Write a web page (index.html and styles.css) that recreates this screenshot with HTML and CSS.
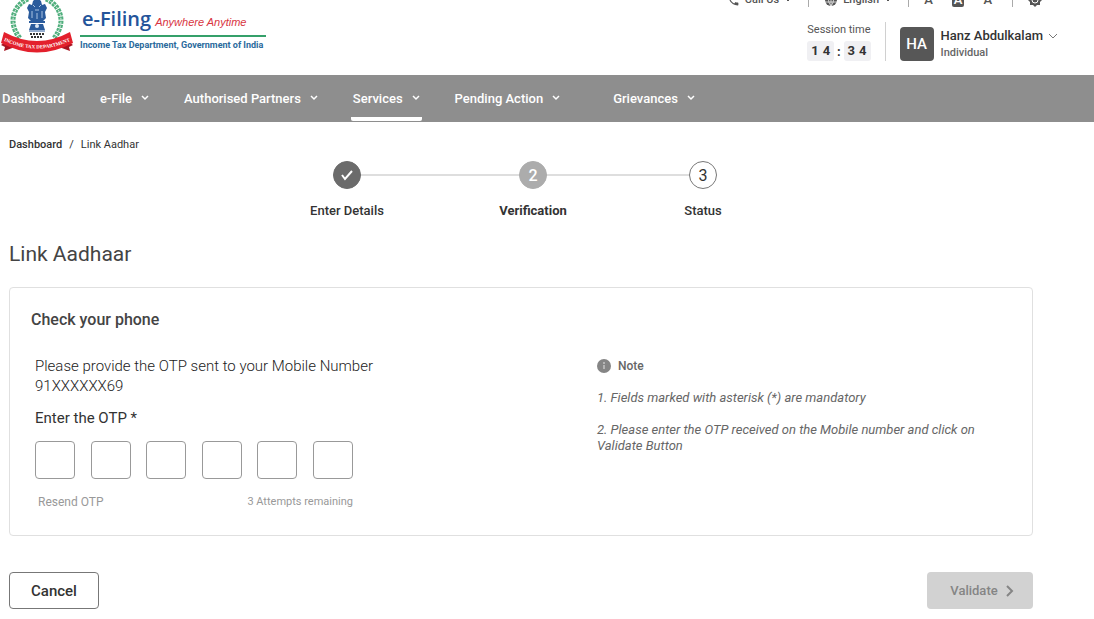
FILE: index.html
```html
<!DOCTYPE html>
<html lang="en">
<head>
    <meta charset="UTF-8">
    <meta name="viewport" content="width=device-width, initial-scale=1.0">
    <title>Link Aadhaar | e-Filing</title>
    <link rel="stylesheet" href="styles.css">
</head>
<body>
    <!-- Header -->
    <header class="header">
        <a class="brand" href="#">
            <svg class="emblem" viewBox="0 0 74 58" aria-hidden="true">
                <!-- Wreath -->
                <path d="M20 42C8 28 12 10 28 3" fill="none" stroke="#4fae7c" stroke-width="5" stroke-dasharray="3 1"/>
                <path d="M54 42C66 28 62 10 46 3" fill="none" stroke="#4fae7c" stroke-width="5" stroke-dasharray="3 1"/>
                <path d="M20 42C8 28 12 10 28 3M54 42C66 28 62 10 46 3" fill="none" stroke="#d8efe2" stroke-width="1" stroke-dasharray="2 2"/>
                <!-- Lions -->
                <path d="M33 5q4-4 8 0l1 4 3-1 2 4-2 4 1 6-3 3H31l-3-3 1-6-2-4 2-4 3 1z" fill="#2a5b9c"/>
                <path d="M33 9l2 2M41 9l-2 2M35 14h4M32 15v7M42 15v7M37 17v6" stroke="#a9c3e2" stroke-width="1"/>
                <path d="M29 25h16v2H29zM31 28h12l2 6H29z" fill="#2a5b9c"/>
                <circle cx="37" cy="30" r="2" fill="#dbe7f4"/>
                <path d="M29 35h16" stroke="#2a5b9c" stroke-width="1"/>
                <path d="M30 38h14M31 41h12" stroke="#333" stroke-width="2" stroke-dasharray="2 1"/>
                <!-- Ribbon -->
                <path d="M1 49l9-7 5 9-11 4 1-4z" fill="#a81522"/>
                <path d="M73 49l-9-7-5 9 11 4-1-4z" fill="#a81522"/>
                <path d="M4 36Q37 54 70 36l3 11Q37 66 1 47z" fill="#e3202c"/>
                <path id="ribbon-line" d="M2 44Q37 61 72 44" fill="none"/>
                <text class="ribbon-text"><textPath href="#ribbon-line" startOffset="50%" text-anchor="middle">INCOME TAX DEPARTMENT</textPath></text>
            </svg>
            <span class="brand-text">
                <span class="brand-top">
                    <span class="brand-name">e-Filing</span>
                    <span class="brand-tag">Anywhere Anytime</span>
                </span>
                <span class="brand-dept">Income Tax Department, Government of India</span>
            </span>
        </a>

        <div class="header-right">
            <!-- Utility links -->
            <div class="utility">
                <button class="util-btn call" type="button">
                    <svg width="13" height="13" viewBox="0 0 24 24" aria-hidden="true"><path d="M6.6 10.8c1.4 2.800 3.800 5.100 6.600 6.600l2.200-2.200c.3-.3.700-.4 1-.2 1.100.4 2.300.6 3.600.6.600 0 1 .4 1 1V20c0 .6-.4 1-1 1C10.600 21 3 13.400 3 4c0-.6.400-1 1-1h3.500c.600 0 1 .4 1 1 0 1.300.2 2.500.6 3.600.1.300 0 .7-.3 1z" fill="currentColor"/></svg>
                    Call Us
                    <svg width="8" height="8" viewBox="0 0 8 8" aria-hidden="true"><path d="M2 3l2 2 2-2" fill="none" stroke="currentColor"/></svg>
                </button>
                <button class="util-btn lang" type="button">
                    <svg width="14" height="14" viewBox="0 0 14 14" aria-hidden="true"><circle cx="7" cy="7" r="6" fill="#555"/><path d="M1 5h12M1 9h12M7 1v12M7 1Q2 7 7 13Q12 7 7 1" fill="none" stroke="#fff" stroke-opacity=".7"/></svg>
                    English
                    <svg width="8" height="8" viewBox="0 0 8 8" aria-hidden="true"><path d="M2 3l2 2 2-2" fill="none" stroke="currentColor"/></svg>
                </button>
                <div class="text-size">
                    <button class="util-btn" type="button" aria-label="Smaller text">A</button>
                    <button class="util-btn boxed" type="button" aria-label="Normal text">A</button>
                    <button class="util-btn" type="button" aria-label="Larger text">A</button>
                </div>
                <button class="util-btn contrast" type="button" aria-label="Contrast">
                    <svg width="14" height="14" viewBox="0 0 14 14"><path d="M7 0l2 2h3v3l2 2-2 2v3H9l-2 2-2-2H2V9L0 7l2-2V2h3z" fill="#555"/><circle cx="7" cy="7" r="3" fill="none" stroke="#fff"/></svg>
                </button>
            </div>

            <!-- Session and user -->
            <div class="account">
                <div class="session">
                    <span class="session-label">Session time</span>
                    <div class="clock">
                        <span class="digits"><span>1</span><span>4</span></span>
                        <span class="colon">:</span>
                        <span class="digits"><span>3</span><span>4</span></span>
                    </div>
                </div>
                <button class="user" type="button">
                    <span class="avatar">HA</span>
                    <span class="user-text">
                        <span class="user-name">Hanz Abdulkalam
                            <svg width="10" height="8" viewBox="0 0 10 8" aria-hidden="true"><path d="M1 2l4 4 4-4" fill="none" stroke="#777" stroke-width="1"/></svg>
                        </span>
                        <span class="user-role">Individual</span>
                    </span>
                </button>
            </div>
        </div>
    </header>

    <!-- Main menu -->
    <nav class="menu">
        <a href="#">Dashboard</a>
        <a href="#">e-File <svg class="caret" viewBox="0 0 8 6" aria-hidden="true"><path d="M1 1l3 3 3-3"/></svg></a>
        <a href="#">Authorised Partners <svg class="caret" viewBox="0 0 8 6" aria-hidden="true"><path d="M1 1l3 3 3-3"/></svg></a>
        <a class="active" href="#">Services <svg class="caret" viewBox="0 0 8 6" aria-hidden="true"><path d="M1 1l3 3 3-3"/></svg></a>
        <a href="#">Pending Action <svg class="caret" viewBox="0 0 8 6" aria-hidden="true"><path d="M1 1l3 3 3-3"/></svg></a>
        <a class="last" href="#">Grievances <svg class="caret" viewBox="0 0 8 6" aria-hidden="true"><path d="M1 1l3 3 3-3"/></svg></a>
    </nav>

    <main class="content">
        <div class="breadcrumb">
            <a href="#">Dashboard</a>
            <span>/</span>
            <span>Link Aadhar</span>
        </div>

        <!-- Progress steps -->
        <ol class="steps">
            <li class="step done">
                <span class="bullet"><svg width="14" height="12" viewBox="0 0 14 12" aria-label="Done"><path d="M2 6l3 4 7-8" fill="none" stroke="#fff" stroke-width="2"/></svg></span>
                <span class="step-label">Enter Details</span>
            </li>
            <li class="step current">
                <span class="bullet">2</span>
                <span class="step-label">Verification</span>
            </li>
            <li class="step">
                <span class="bullet">3</span>
                <span class="step-label">Status</span>
            </li>
        </ol>

        <h1>Link Aadhaar</h1>

        <form>
            <section class="card">
                <h2>Check your phone</h2>
                <div class="card-body">
                    <div class="otp">
                        <p class="otp-text">Please provide the OTP sent to your Mobile Number 91XXXXXX69</p>
                        <label class="otp-label" for="otp1">Enter the OTP *</label>
                        <div class="otp-boxes">
                            <input id="otp1" type="text" maxlength="1" inputmode="numeric">
                            <input type="text" maxlength="1" inputmode="numeric" aria-label="Digit 2">
                            <input type="text" maxlength="1" inputmode="numeric" aria-label="Digit 3">
                            <input type="text" maxlength="1" inputmode="numeric" aria-label="Digit 4">
                            <input type="text" maxlength="1" inputmode="numeric" aria-label="Digit 5">
                            <input type="text" maxlength="1" inputmode="numeric" aria-label="Digit 6">
                        </div>
                        <div class="otp-foot">
                            <button class="resend" type="button" disabled>Resend OTP</button>
                            <span class="attempts">3 Attempts remaining</span>
                        </div>
                    </div>
                    <aside class="note">
                        <h3>
                            <svg width="14" height="14" viewBox="0 0 14 14" aria-hidden="true"><circle cx="7" cy="7" r="7" fill="#858585"/><path d="M7 6v4M7 3v2" stroke="#b4b4b4" stroke-width="2"/></svg>
                            Note
                        </h3>
                        <p>1. Fields marked with asterisk (*) are mandatory</p>
                        <p>2. Please enter the OTP received on the Mobile number and click on Validate Button</p>
                    </aside>
                </div>
            </section>

            <div class="actions">
                <button class="btn cancel" type="button">Cancel</button>
                <button class="btn validate" type="submit" disabled>
                    Validate
                    <svg width="8" height="12" viewBox="0 0 8 12" aria-hidden="true"><path d="M1 1l5 5-5 5" fill="none" stroke="#858585" stroke-width="2"/></svg>
                </button>
            </div>
        </form>
    </main>
</body>
</html>
```
FILE: styles.css
```css
* {
    box-sizing: border-box;
}

body {
    margin: 0;
    font-family: Roboto, Arial, sans-serif;
    font-size: 12px;
    color: #333;
    background-color: #fff;
    overflow: hidden;
}

button {
    font-family: inherit;
    color: inherit;
    background: none;
    border: none;
    padding: 0;
    cursor: pointer;
}

a {
    color: inherit;
    text-decoration: none;
}

/* Header */
.header {
    display: flex;
    justify-content: space-between;
    align-items: flex-start;
    padding: 0 36px 14px 0;
}

.brand {
    display: flex;
    gap: 6px;
    margin-top: -4px;
}

.emblem {
    width: 74px;
    height: 58px;
}

.ribbon-text {
    font-family: "Liberation Serif", serif;
    font-size: 5px;
    font-weight: bold;
    fill: #fff;
}

.brand-text {
    display: flex;
    flex-direction: column;
    padding-top: 10px;
}

.brand-top {
    display: flex;
    align-items: baseline;
    gap: 4px;
    padding: 0 20px 0 2px;
    line-height: 25px;
    border-bottom: 2px solid #35a06a;
}

.brand-name {
    font-family: "Open Sans", sans-serif;
    font-size: 20px;
    font-weight: 600;
    color: #24549a;
}

.brand-tag {
    font-family: "Liberation Sans", sans-serif;
    font-size: 11px;
    font-style: italic;
    color: #d8343f;
}

.brand-dept {
    font-size: 9px;
    font-weight: bold;
    line-height: 16px;
    color: #2a6a9c;
}

.header-right {
    display: flex;
    flex-direction: column;
    align-items: flex-end;
}

/* Utility links */
.utility {
    display: flex;
    align-items: center;
    height: 16px;
    margin-top: -8px;
    margin-right: 16px;
    color: #555;
}

.util-btn {
    display: flex;
    align-items: center;
    gap: 5px;
    font-size: 11px;
    line-height: 14px;
    font-weight: 500;
}

.utility > * + * {
    border-left: 1px solid #aaa;
    padding-left: 15px;
    margin-left: 16px;
}

.text-size {
    display: flex;
    gap: 19px;
}

.text-size .util-btn {
    font-size: 13px;
}

.text-size .boxed {
    color: #fff;
    background-color: #555;
    border-radius: 2px;
    padding: 0 2px;
}

.utility .contrast {
    margin-left: 20px;
}

/* Session and user */
.account {
    display: flex;
    align-items: flex-end;
    margin-top: 14px;
}

.session {
    padding-right: 14px;
    border-right: 1px solid #d0d0d0;
}

.session-label {
    display: block;
    font-size: 11px;
    line-height: 16px;
    color: #555;
}

.clock {
    display: flex;
    align-items: center;
    justify-content: space-between;
    margin-top: 3px;
    font-size: 13px;
    font-weight: bold;
    color: #333;
}

.digits {
    display: flex;
    gap: 4px;
    line-height: 20px;
    padding: 0 4px;
    background-color: #f0f0f3;
    border-radius: 3px;
}

.user {
    display: flex;
    align-items: center;
    gap: 7px;
    margin-left: 14px;
    text-align: left;
}

.avatar {
    width: 34px;
    line-height: 34px;
    border-radius: 4px;
    background-color: #575757;
    color: #fff;
    font-size: 15px;
    font-weight: 500;
    text-align: center;
}

.user-text {
    display: flex;
    flex-direction: column;
    line-height: 17px;
}

.user-name {
    display: flex;
    align-items: center;
    gap: 5px;
    font-size: 13px;
    font-weight: 500;
    color: #333;
}

.user-role {
    font-size: 11px;
    font-weight: 500;
    color: #666;
}

/* Main menu */
.menu {
    display: flex;
    gap: 31px;
    height: 47px;
    padding-bottom: 1px;
    background-color: #8e8e8e;
    color: #fff;
    font-size: 13px;
    font-weight: 500;
}

.menu a {
    display: flex;
    align-items: center;
    gap: 9px;
    padding: 4px 2px 0;
    border-bottom: 4px solid transparent;
}

.menu .active {
    border-bottom-color: #fff;
    border-radius: 2px;
}

.menu .last {
    margin-left: 18px;
}

.caret {
    width: 8px;
    height: 6px;
    fill: none;
    stroke: #fff;
    stroke-width: 1.5;
}

/* Content */
.content {
    padding: 15px 61px 10px 9px;
}

.breadcrumb {
    display: flex;
    gap: 7px;
    font-size: 11px;
    line-height: 16px;
}

.breadcrumb a {
    font-weight: 500;
}

/* Progress steps */
.steps {
    display: flex;
    justify-content: center;
    list-style: none;
    margin: 8px 0 0;
    padding: 0 8px 0 0;
}

.step {
    position: relative;
    display: flex;
    flex-direction: column;
    align-items: center;
    width: 170px;
}

.step:first-child {
    width: 202px;
}

.bullet {
    z-index: 1;
    display: flex;
    align-items: center;
    justify-content: center;
    width: 28px;
    height: 28px;
    border: 1px solid #777;
    border-radius: 50%;
    background-color: #fff;
    font-size: 16px;
}

.step.done .bullet {
    background-color: #6b6b6b;
    border-color: #6b6b6b;
}

.step.current .bullet {
    background-color: #acacac;
    border-color: #acacac;
    color: #fff;
    font-weight: 500;
}

/* Line to the next step */
.step:not(:last-child)::after {
    content: "";
    position: absolute;
    top: 13px;
    left: 50%;
    width: 100%;
    height: 2px;
    background-color: #dedede;
}

.step-label {
    margin-top: 14px;
    font-size: 13px;
    line-height: 16px;
    font-weight: 500;
}

.step.current .step-label {
    font-weight: bold;
}

h1 {
    margin: 20px 0 18px;
    font-size: 21px;
    line-height: 30px;
    font-weight: normal;
    color: #444;
}

/* Card */
.card {
    padding: 20px 21px 25px;
    border: 1px solid #e0e0e0;
    border-radius: 4px;
}

h2 {
    margin: 0 0 24px;
    font-size: 16px;
    line-height: 24px;
    font-weight: 500;
    color: #444;
}

.card-body {
    display: flex;
    justify-content: space-between;
    padding: 0 26px 0 4px;
}

.otp {
    width: 350px;
}

.otp-text {
    margin: 0;
    font-size: 15px;
    line-height: 20px;
    font-weight: 300;
    color: #222;
}

.otp-label {
    display: block;
    margin-top: 12px;
    font-size: 15px;
    line-height: 20px;
}

.otp-boxes {
    display: flex;
    justify-content: space-between;
    width: 318px;
    margin-top: 13px;
}

.otp-boxes input {
    width: 40px;
    height: 38px;
    border: 1px solid #999;
    border-radius: 4px;
    font-size: 16px;
    text-align: center;
}

.otp-foot {
    display: flex;
    justify-content: space-between;
    width: 318px;
    margin-top: 15px;
    padding-left: 3px;
    font-size: 11px;
    line-height: 16px;
    color: #999;
}

.resend {
    font-size: 12px;
    line-height: 16px;
}

/* Note */
.note {
    width: 388px;
    font-size: 13px;
    line-height: 16px;
    color: #666;
}

.note h3 {
    display: flex;
    align-items: center;
    gap: 7px;
    margin: 2px 0 16px;
    font-size: 12px;
    font-weight: 500;
}

.note p {
    margin: 0 0 16px;
    font-style: italic;
}

/* Buttons */
.actions {
    display: flex;
    justify-content: space-between;
    margin-top: 36px;
}

.btn {
    display: flex;
    align-items: center;
    justify-content: center;
    gap: 8px;
    height: 37px;
    border-radius: 4px;
    font-weight: 500;
}

.cancel {
    width: 90px;
    border: 1px solid #777;
    font-size: 15px;
}

.validate {
    width: 106px;
    padding-left: 4px;
    background-color: #d2d2d2;
    font-size: 13px;
    color: #858585;
}
```
